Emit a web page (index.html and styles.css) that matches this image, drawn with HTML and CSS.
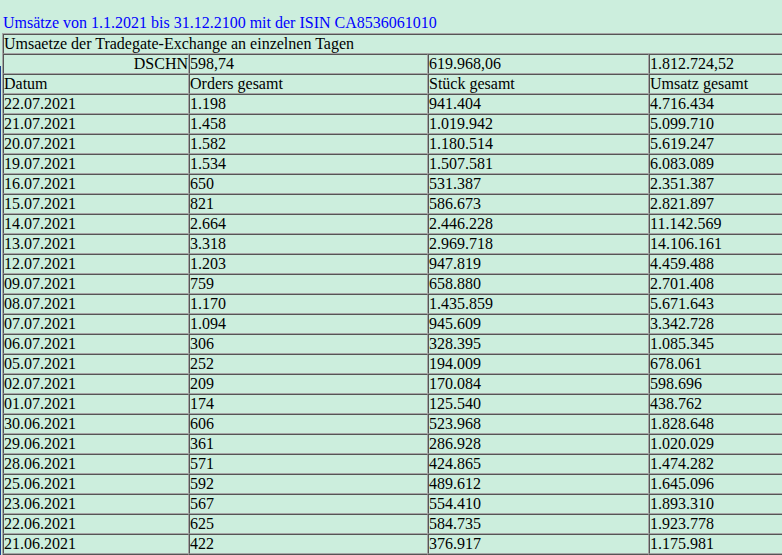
FILE: index.html
```html
<!DOCTYPE html>
<html lang="de">
<head>
<meta charset="utf-8">
<title>Umsätze</title>
<link rel="stylesheet" href="styles.css">
</head>
<body>
<div class="edge"></div>
<div class="title">Umsätze von 1.1.2021 bis 31.12.2100 mit der ISIN CA8536061010</div>
<table class="grid">
  <colgroup>
    <col class="c1"><col class="c2"><col class="c3"><col class="c4">
  </colgroup>
  <tr><td colspan="4">Umsaetze der Tradegate-Exchange an einzelnen Tagen</td></tr>
  <tr><td class="right">DSCHN</td><td>598,74</td><td>619.968,06</td><td>1.812.724,52</td></tr>
  <tr><td>Datum</td><td>Orders gesamt</td><td>Stück gesamt</td><td>Umsatz gesamt</td></tr>
  <tr><td>22.07.2021</td><td>1.198</td><td>941.404</td><td>4.716.434</td></tr>
  <tr><td>21.07.2021</td><td>1.458</td><td>1.019.942</td><td>5.099.710</td></tr>
  <tr><td>20.07.2021</td><td>1.582</td><td>1.180.514</td><td>5.619.247</td></tr>
  <tr><td>19.07.2021</td><td>1.534</td><td>1.507.581</td><td>6.083.089</td></tr>
  <tr><td>16.07.2021</td><td>650</td><td>531.387</td><td>2.351.387</td></tr>
  <tr><td>15.07.2021</td><td>821</td><td>586.673</td><td>2.821.897</td></tr>
  <tr><td>14.07.2021</td><td>2.664</td><td>2.446.228</td><td>11.142.569</td></tr>
  <tr><td>13.07.2021</td><td>3.318</td><td>2.969.718</td><td>14.106.161</td></tr>
  <tr><td>12.07.2021</td><td>1.203</td><td>947.819</td><td>4.459.488</td></tr>
  <tr><td>09.07.2021</td><td>759</td><td>658.880</td><td>2.701.408</td></tr>
  <tr><td>08.07.2021</td><td>1.170</td><td>1.435.859</td><td>5.671.643</td></tr>
  <tr><td>07.07.2021</td><td>1.094</td><td>945.609</td><td>3.342.728</td></tr>
  <tr><td>06.07.2021</td><td>306</td><td>328.395</td><td>1.085.345</td></tr>
  <tr><td>05.07.2021</td><td>252</td><td>194.009</td><td>678.061</td></tr>
  <tr><td>02.07.2021</td><td>209</td><td>170.084</td><td>598.696</td></tr>
  <tr><td>01.07.2021</td><td>174</td><td>125.540</td><td>438.762</td></tr>
  <tr><td>30.06.2021</td><td>606</td><td>523.968</td><td>1.828.648</td></tr>
  <tr><td>29.06.2021</td><td>361</td><td>286.928</td><td>1.020.029</td></tr>
  <tr><td>28.06.2021</td><td>571</td><td>424.865</td><td>1.474.282</td></tr>
  <tr><td>25.06.2021</td><td>592</td><td>489.612</td><td>1.645.096</td></tr>
  <tr><td>23.06.2021</td><td>567</td><td>554.410</td><td>1.893.310</td></tr>
  <tr><td>22.06.2021</td><td>625</td><td>584.735</td><td>1.923.778</td></tr>
  <tr><td>21.06.2021</td><td>422</td><td>376.917</td><td>1.175.981</td></tr>
  <tr><td>&nbsp;</td><td>&nbsp;</td><td>&nbsp;</td><td>&nbsp;</td></tr>
</table>
</body>
</html>
```
FILE: styles.css
```css
html {
  overflow: hidden;
  background: #cceedd;
}
body {
  margin: 13px 0 0 2px;
  background: #cceedd;
  font-family: "Liberation Serif", "Times New Roman", serif;
  font-size: 16px;
  color: #000;
  position: relative;
  min-height: 600px;
}
.edge {
  position: fixed;
  left: 0;
  top: 66px;
  bottom: 0;
  width: 1px;
  background: #1d3f8f;
}
.title {
  color: #0000ff;
  line-height: 19px;
  height: 20px;
  padding-left: 1px;
}
.grid {
  border-collapse: separate;
  border-spacing: 0;
  border: 1px solid;
  border-color: #a6a6a6 #555 #555 #a6a6a6;
  width: 880px;
  table-layout: fixed;
}
.grid td {
  border: 1px solid;
  border-color: #555 #a6a6a6 #a6a6a6 #555;
  padding: 0;
  line-height: 18px;
  height: 18px;
  white-space: nowrap;
  overflow: hidden;
  vertical-align: middle;
}
.grid .right {
  text-align: right;
}
.c1 { width: 186px; }
.c2 { width: 239px; }
.c3 { width: 221px; }
.c4 { width: 232px; }
```
